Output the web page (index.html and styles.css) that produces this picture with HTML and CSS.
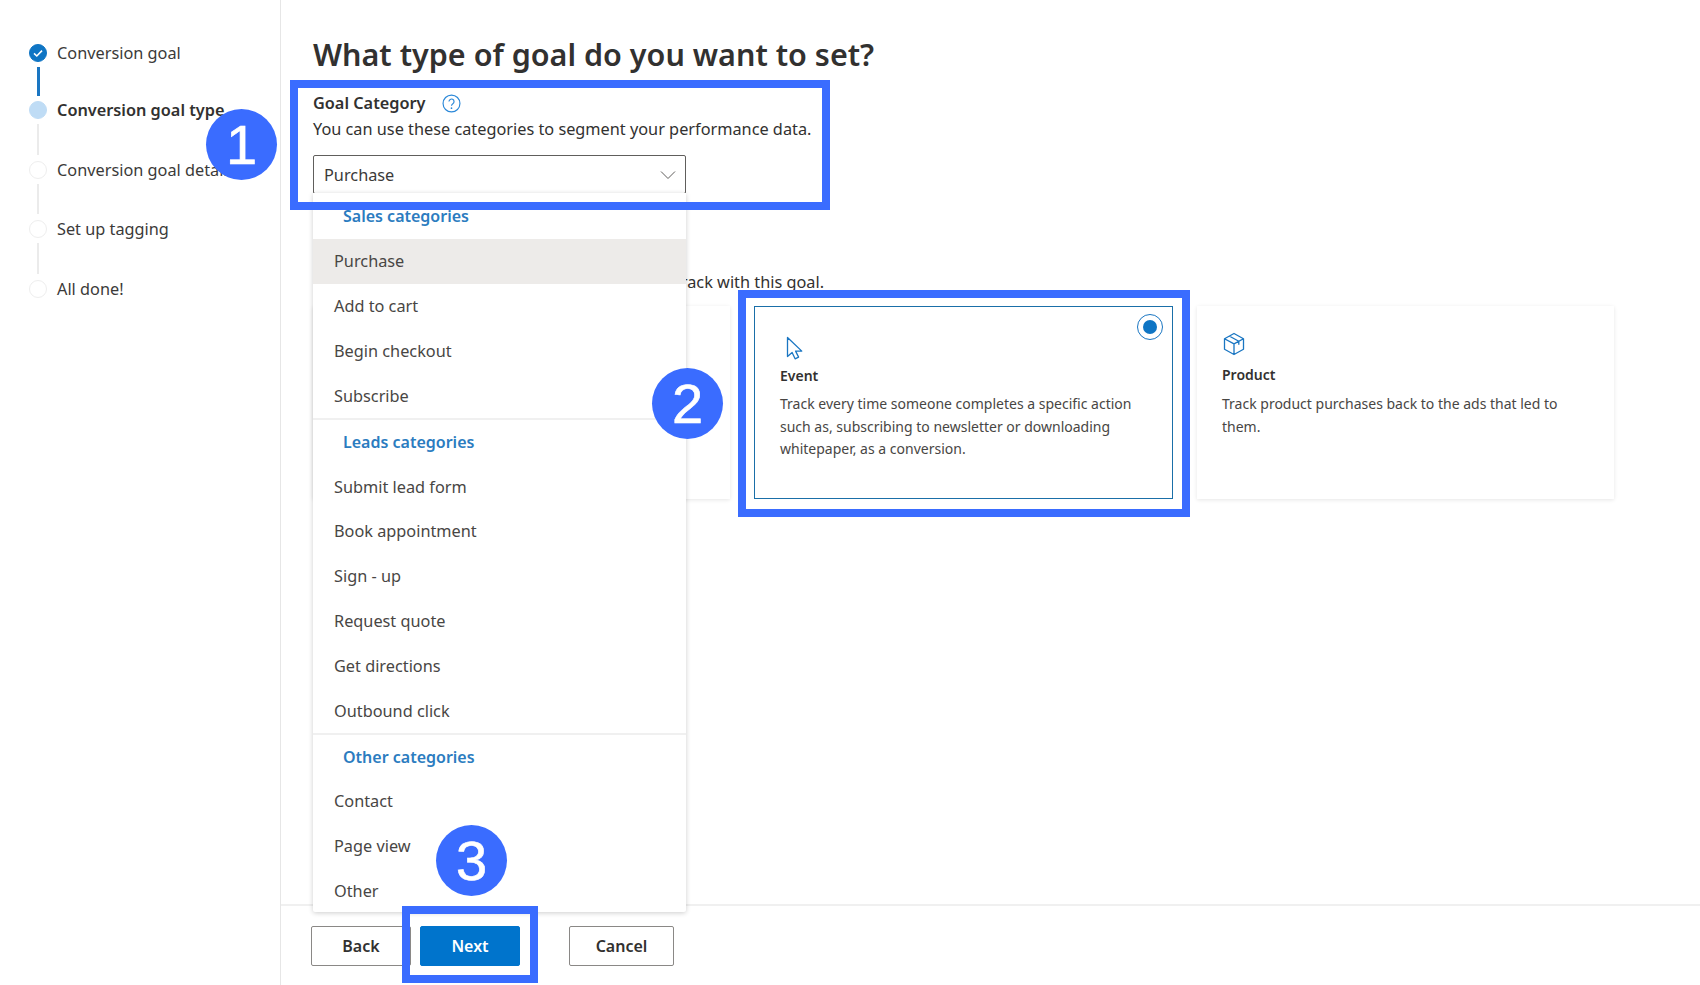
FILE: index.html
```html
<!DOCTYPE html>
<html lang="en">
<head>
<meta charset="utf-8">
<title>Conversion goal type</title>
<link rel="stylesheet" href="styles.css">
</head>
<body>
<div class="app">
  <aside class="sidebar">
    <div class="step">
      <span class="dot dot-done"><svg viewBox="0 0 18 18" width="18" height="18"><path d="M5 9.4l2.8 2.6L13 6.6" fill="none" stroke="#fff" stroke-width="1.6"/></svg></span>
      <span class="step-label">Conversion goal</span>
    </div>
    <div class="link link-done"></div>
    <div class="step">
      <span class="dot dot-current"></span>
      <span class="step-label step-label-current">Conversion goal type</span>
    </div>
    <div class="link"></div>
    <div class="step">
      <span class="dot"></span>
      <span class="step-label">Conversion goal details</span>
    </div>
    <div class="link"></div>
    <div class="step">
      <span class="dot"></span>
      <span class="step-label">Set up tagging</span>
    </div>
    <div class="link"></div>
    <div class="step">
      <span class="dot"></span>
      <span class="step-label">All done!</span>
    </div>
  </aside>

  <main class="main">
    <div class="content">
      <h1 class="title">What type of goal do you want to set?</h1>
      <div class="label-row">
        <span class="field-label">Goal Category</span>
        <svg class="help" viewBox="0 0 18 18" width="19" height="19"><circle cx="9" cy="9" r="8" fill="none" stroke="#2b88d8" stroke-width="1.1"/><path d="M6.6 7.2a2.4 2.4 0 1 1 3.7 2c-.9.6-1.3 1-1.3 2" fill="none" stroke="#2b88d8" stroke-width="1.1"/><circle cx="9" cy="13.4" r=".8" fill="#2b88d8"/></svg>
      </div>
      <p class="field-help">You can use these categories to segment your performance data.</p>
      <div class="select">
        <span>Purchase</span>
        <svg viewBox="0 0 16 10" width="16" height="10"><path d="M1 1.5l7 7 7-7" fill="none" stroke="#605e5c" stroke-width="1"/></svg>
        <div class="menu">
          <div class="menu-group">
            <div class="menu-head menu-head-first">Sales categories</div>
            <div class="menu-item menu-item-active">Purchase</div>
            <div class="menu-item">Add to cart</div>
            <div class="menu-item">Begin checkout</div>
            <div class="menu-item">Subscribe</div>
          </div>
          <div class="menu-group">
            <div class="menu-head">Leads categories</div>
            <div class="menu-item">Submit lead form</div>
            <div class="menu-item">Book appointment</div>
            <div class="menu-item">Sign - up</div>
            <div class="menu-item">Request quote</div>
            <div class="menu-item">Get directions</div>
            <div class="menu-item">Outbound click</div>
          </div>
          <div class="menu-group">
            <div class="menu-head">Other categories</div>
            <div class="menu-item">Contact</div>
            <div class="menu-item">Page view</div>
            <div class="menu-item">Other</div>
          </div>
        </div>
      </div>
      <p class="track-text">Select the type of conversion you want to track with this goal.</p>
      <div class="cards">
        <div class="card"></div>
        <div class="card card-selected">
          <span class="radio"></span>
          <svg class="card-icon" viewBox="0 0 22 26" width="22" height="26"><path d="M3.5 2.5v19l4.600-4 3 6.300 3.500-1.700-3-6h6.200z" fill="none" stroke="#1a76c2" stroke-width="1.300" stroke-linejoin="round"/></svg>
          <div class="card-title">Event</div>
          <div class="card-text">Track every time someone completes a specific action such as, subscribing to newsletter or downloading whitepaper, as a conversion.</div>
        </div>
        <div class="card card-product">
          <svg class="card-icon" viewBox="0 0 24 26" width="24" height="26"><path d="M12 2.500l9.500 5.200v10.600L12 23.500l-9.500-5.200V7.700zM2.500 7.700l9.500 5.200 9.500-5.200M12 12.900v10.600M7.200 5l9.600 5.300v3.500" fill="none" stroke="#1a76c2" stroke-width="1.300" stroke-linejoin="round"/></svg>
          <div class="card-title">Product</div>
          <div class="card-text">Track product purchases back to the ads that led to them.</div>
        </div>
      </div>
    </div>
    <footer class="footer">
      <button class="btn btn-back">Back</button>
      <button class="btn btn-primary">Next</button>
      <button class="btn btn-cancel">Cancel</button>
    </footer>
  </main>
</div>

<div class="mark mark-goal"></div>
<div class="mark mark-event"></div>
<div class="mark mark-next"></div>
<div class="badge badge-1">1</div>
<div class="badge badge-2">2</div>
<div class="badge badge-3">3</div>
</body>
</html>
```

FILE: styles.css
```css
* { box-sizing: border-box; }
html, body { margin: 0; height: 100%; overflow: hidden; }
body {
  background: #fff;
  color: #323130;
  font-family: "Noto Sans", "Open Sans", "Liberation Sans", sans-serif;
  font-size: 16.3px;
}
.app { display: flex; height: 985px; }

/* Stepper */
.sidebar {
  width: 281px;
  flex: none;
  border-right: 1.5px solid #e6e6e6;
  padding: 44px 0 0 29px;
}
.step { display: flex; align-items: center; height: 18px; gap: 10px; }
.dot {
  width: 18px; height: 18px; flex: none;
  border-radius: 50%;
  border: 1px solid #eeeeee;
  background: #fff;
}
.dot-done { background: #0f75c4; border-color: #0f75c4; display: flex; align-items: center; justify-content: center; }
.dot-done svg { flex: none; }
.dot-current { background: #bfdcf5; border-color: #bfdcf5; }
.step-label { white-space: nowrap; color: #3b3a39; }
.step-label-current { font-weight: 600; color: #323130; }
.link { width: 2px; height: 30.600px; margin: 5px 0 6px 8px; background: #ebebeb; }
.link-done { background: #1a76c2; width: 2.500px; height: 29px; margin-bottom: 5px; }

/* Main column */
.main { flex: 1; display: flex; flex-direction: column; min-width: 0; }
.content { flex: 1; padding: 32px 86px 0 32px; }
.title { margin: 0; font-size: 30.500px; line-height: 44px; font-weight: 600; color: #323130; }
.label-row { display: flex; align-items: center; gap: 16px; margin-top: 15px; height: 24px; }
.field-label { font-weight: 600; }
.field-help { margin: 2px 0 0; line-height: 24px; }

.select {
  position: relative;
  z-index: 2;
  width: 373px;
  height: 39px;
  margin-top: 14px;
  padding: 0 9px 0 10px;
  display: flex;
  align-items: center;
  justify-content: space-between;
  border: 1px solid #605e5c;
  border-radius: 2px;
  background: #fff;
  color: #3b3a39;
}
.menu {
  position: absolute;
  left: -1px;
  top: 100%;
  width: 373px;
  height: 719px;
  overflow: hidden;
  background: #fff;
  box-shadow: 0 1px 5px rgba(0,0,0,.2);
  border-radius: 0 0 2px 2px;
}
.menu-group { border-bottom: 2px solid #f0f0f0; }
.menu-group:last-child { border-bottom: 0; }
.menu-head {
  height: 44px;
  padding-left: 30px;
  display: flex;
  align-items: center;
  color: #2b7cc0;
  font-weight: 600;
  font-size: 16px;
}
.menu-head-first { height: 46px; }
.menu-item {
  height: 44.800px;
  padding-left: 21px;
  display: flex;
  align-items: center;
  color: #484644;
}
.menu-item-active { background: #edebe9; }

.track-text { width: 511px; margin: 76px 0 0; height: 24px; line-height: 24px; white-space: nowrap; text-align: right; }

.cards { display: grid; grid-template-columns: 417px 419px 1fr; gap: 24px; margin-top: 12px; }
.card {
  position: relative;
  height: 193px;
  padding: 26px;
  background: #fff;
  box-shadow: 0 1px 4px rgba(0,0,0,.1);
}
.card-selected { border: 1px solid #1a6fa8; padding: 25px; box-shadow: none; }
.card-icon { display: block; height: 26px; }
.card-title { font-weight: 600; font-size: 14px; line-height: 22px; color: #323130; }
.card-text { font-size: 14px; line-height: 22.500px; color: #484644; }
.card-selected .card-icon { margin: 3px 0 0 4px; }
.card-selected .card-title { margin-top: 4px; }
.card-selected .card-text { margin-top: 6px; }
.card-product { padding: 25px 26px 26px 25px; }
.card-product .card-title { margin-top: 7px; }
.card-product .card-text { margin-top: 7px; }
.radio {
  position: absolute;
  top: 7px; right: 9px;
  width: 26px; height: 26px;
  border: 1.500px solid #1a76c2;
  border-radius: 50%;
  display: flex;
  align-items: center;
  justify-content: center;
}
.radio::after { content: ""; width: 14px; height: 14px; border-radius: 50%; background: #0f75c4; }

/* Footer */
.footer {
  height: 81px;
  flex: none;
  border-top: 2px solid #f0f0f0;
  padding: 20px 0 0 30px;
  display: flex;
  align-items: flex-start;
}
.btn {
  height: 40px;
  border: 1px solid #8a8886;
  border-radius: 2px;
  background: #fff;
  font: 600 16px "Noto Sans", "Open Sans", "Liberation Sans", sans-serif;
  color: #323130;
}
.btn-back { width: 100px; }
.btn-primary { width: 100px; margin-left: 9px; background: #0074cc; border-color: #0074cc; color: #fff; }
.btn-cancel { width: 105px; margin-left: 49px; }

/* Annotations laid over the page */
.mark { position: absolute; border: 8px solid #3a6cff; z-index: 5; }
.mark-goal { left: 290px; top: 80px; width: 540px; height: 130px; }
.mark-event { left: 738px; top: 290px; width: 452px; height: 227px; }
.mark-next { left: 402px; top: 906px; width: 136px; height: 77px; }
.badge {
  position: absolute;
  width: 71px; height: 71px;
  border-radius: 50%;
  background: #3a6cff;
  color: #fff;
  z-index: 6;
  display: flex;
  align-items: center;
  justify-content: center;
  font: 400 56px "Liberation Sans", sans-serif;
  -webkit-text-stroke: .6px #fff;
}
.badge-1 { left: 206px; top: 109px; }
.badge-2 { left: 652px; top: 368px; }
.badge-3 { left: 436px; top: 825px; }
```
